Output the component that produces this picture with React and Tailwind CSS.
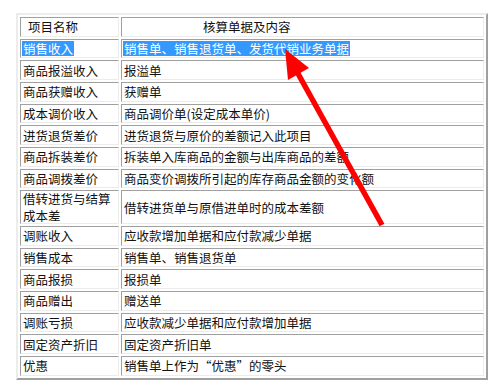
const rows = [
  { name: '销售收入', desc: '销售单、销售退货单、发货代销业务单据', selected: true },
  { name: '商品报溢收入', desc: '报溢单' },
  { name: '商品获赠收入', desc: '获赠单' },
  { name: '成本调价收入', desc: '商品调价单(设定成本单价)' },
  { name: '进货退货差价', desc: '进货退货与原价的差额记入此项目' },
  { name: '商品拆装差价', desc: '拆装单入库商品的金额与出库商品的差额' },
  { name: '商品调拨差价', desc: '商品变价调拨所引起的库存商品金额的变化额' },
  { name: '借转进货与结算成本差', desc: '借转进货单与原借进单时的成本差额', tall: true },
  { name: '调账收入', desc: '应收款增加单据和应付款减少单据' },
  { name: '销售成本', desc: '销售单、销售退货单' },
  { name: '商品报损', desc: '报损单' },
  { name: '商品赠出', desc: '赠送单' },
  { name: '调账亏损', desc: '应收款减少单据和应付款增加单据' },
  { name: '固定资产折旧', desc: '固定资产折旧单' },
  { name: '优惠', desc: '销售单上作为“优惠”的零头' },
];

const cell = 'bg-white border border-t-[#a0a0a0] border-l-[#a0a0a0] border-b-[#ececec] border-r-[#ececec] flex items-center pl-[1px]';

const App = () => {
  return (
    <div
      className="relative w-[500px] h-[388px] bg-white overflow-hidden text-[12.5px] leading-[15px] text-[#111]"
      style={{ fontFamily: '"Noto Sans CJK SC", "Noto Sans", sans-serif' }}
    >
      <div className="ml-[16px] mt-[13px] w-[472px] border-2 border-t-[#ececec] border-l-[#ececec] border-r-[#a0a0a0] border-b-[#a0a0a0] p-[2px]">
        <div className="grid grid-cols-[99px_363px] gap-[2px]">
          <div className={`${cell} h-[19.67px] pl-[7px]`}>项目名称</div>
          <div className={`${cell} h-[19.67px] pl-[81px]`}>核算单据及内容</div>
          {rows.map((r) => (
            <div key={r.name} className="contents">
              <div className={`${cell} ${r.tall ? 'h-[33.7px] leading-[17px]' : 'h-[19.67px]'}`}>
                {r.selected ? (
                  <span className="bg-[#3399ff] text-white px-[1px]">{r.name}</span>
                ) : (
                  <span className="px-[1px]">{r.name}</span>
                )}
              </div>
              <div className={`${cell} ${r.tall ? 'h-[33.7px]' : 'h-[19.67px]'}`}>
                {r.selected ? (
                  <span className="bg-[#3399ff] text-white px-[1px]">{r.desc}</span>
                ) : (
                  <span className="px-[1px]">{r.desc}</span>
                )}
              </div>
            </div>
          ))}
        </div>
      </div>

      <svg className="absolute left-0 top-0 pointer-events-none" width="500" height="388" viewBox="0 0 500 388">
        <line x1="382" y1="225" x2="296" y2="70" stroke="#ff0000" strokeWidth="5.5" strokeLinecap="butt" />
        <polygon points="285,49 309,68 288,80" fill="#ff0000" />
      </svg>
    </div>
  );
};

export default App;
